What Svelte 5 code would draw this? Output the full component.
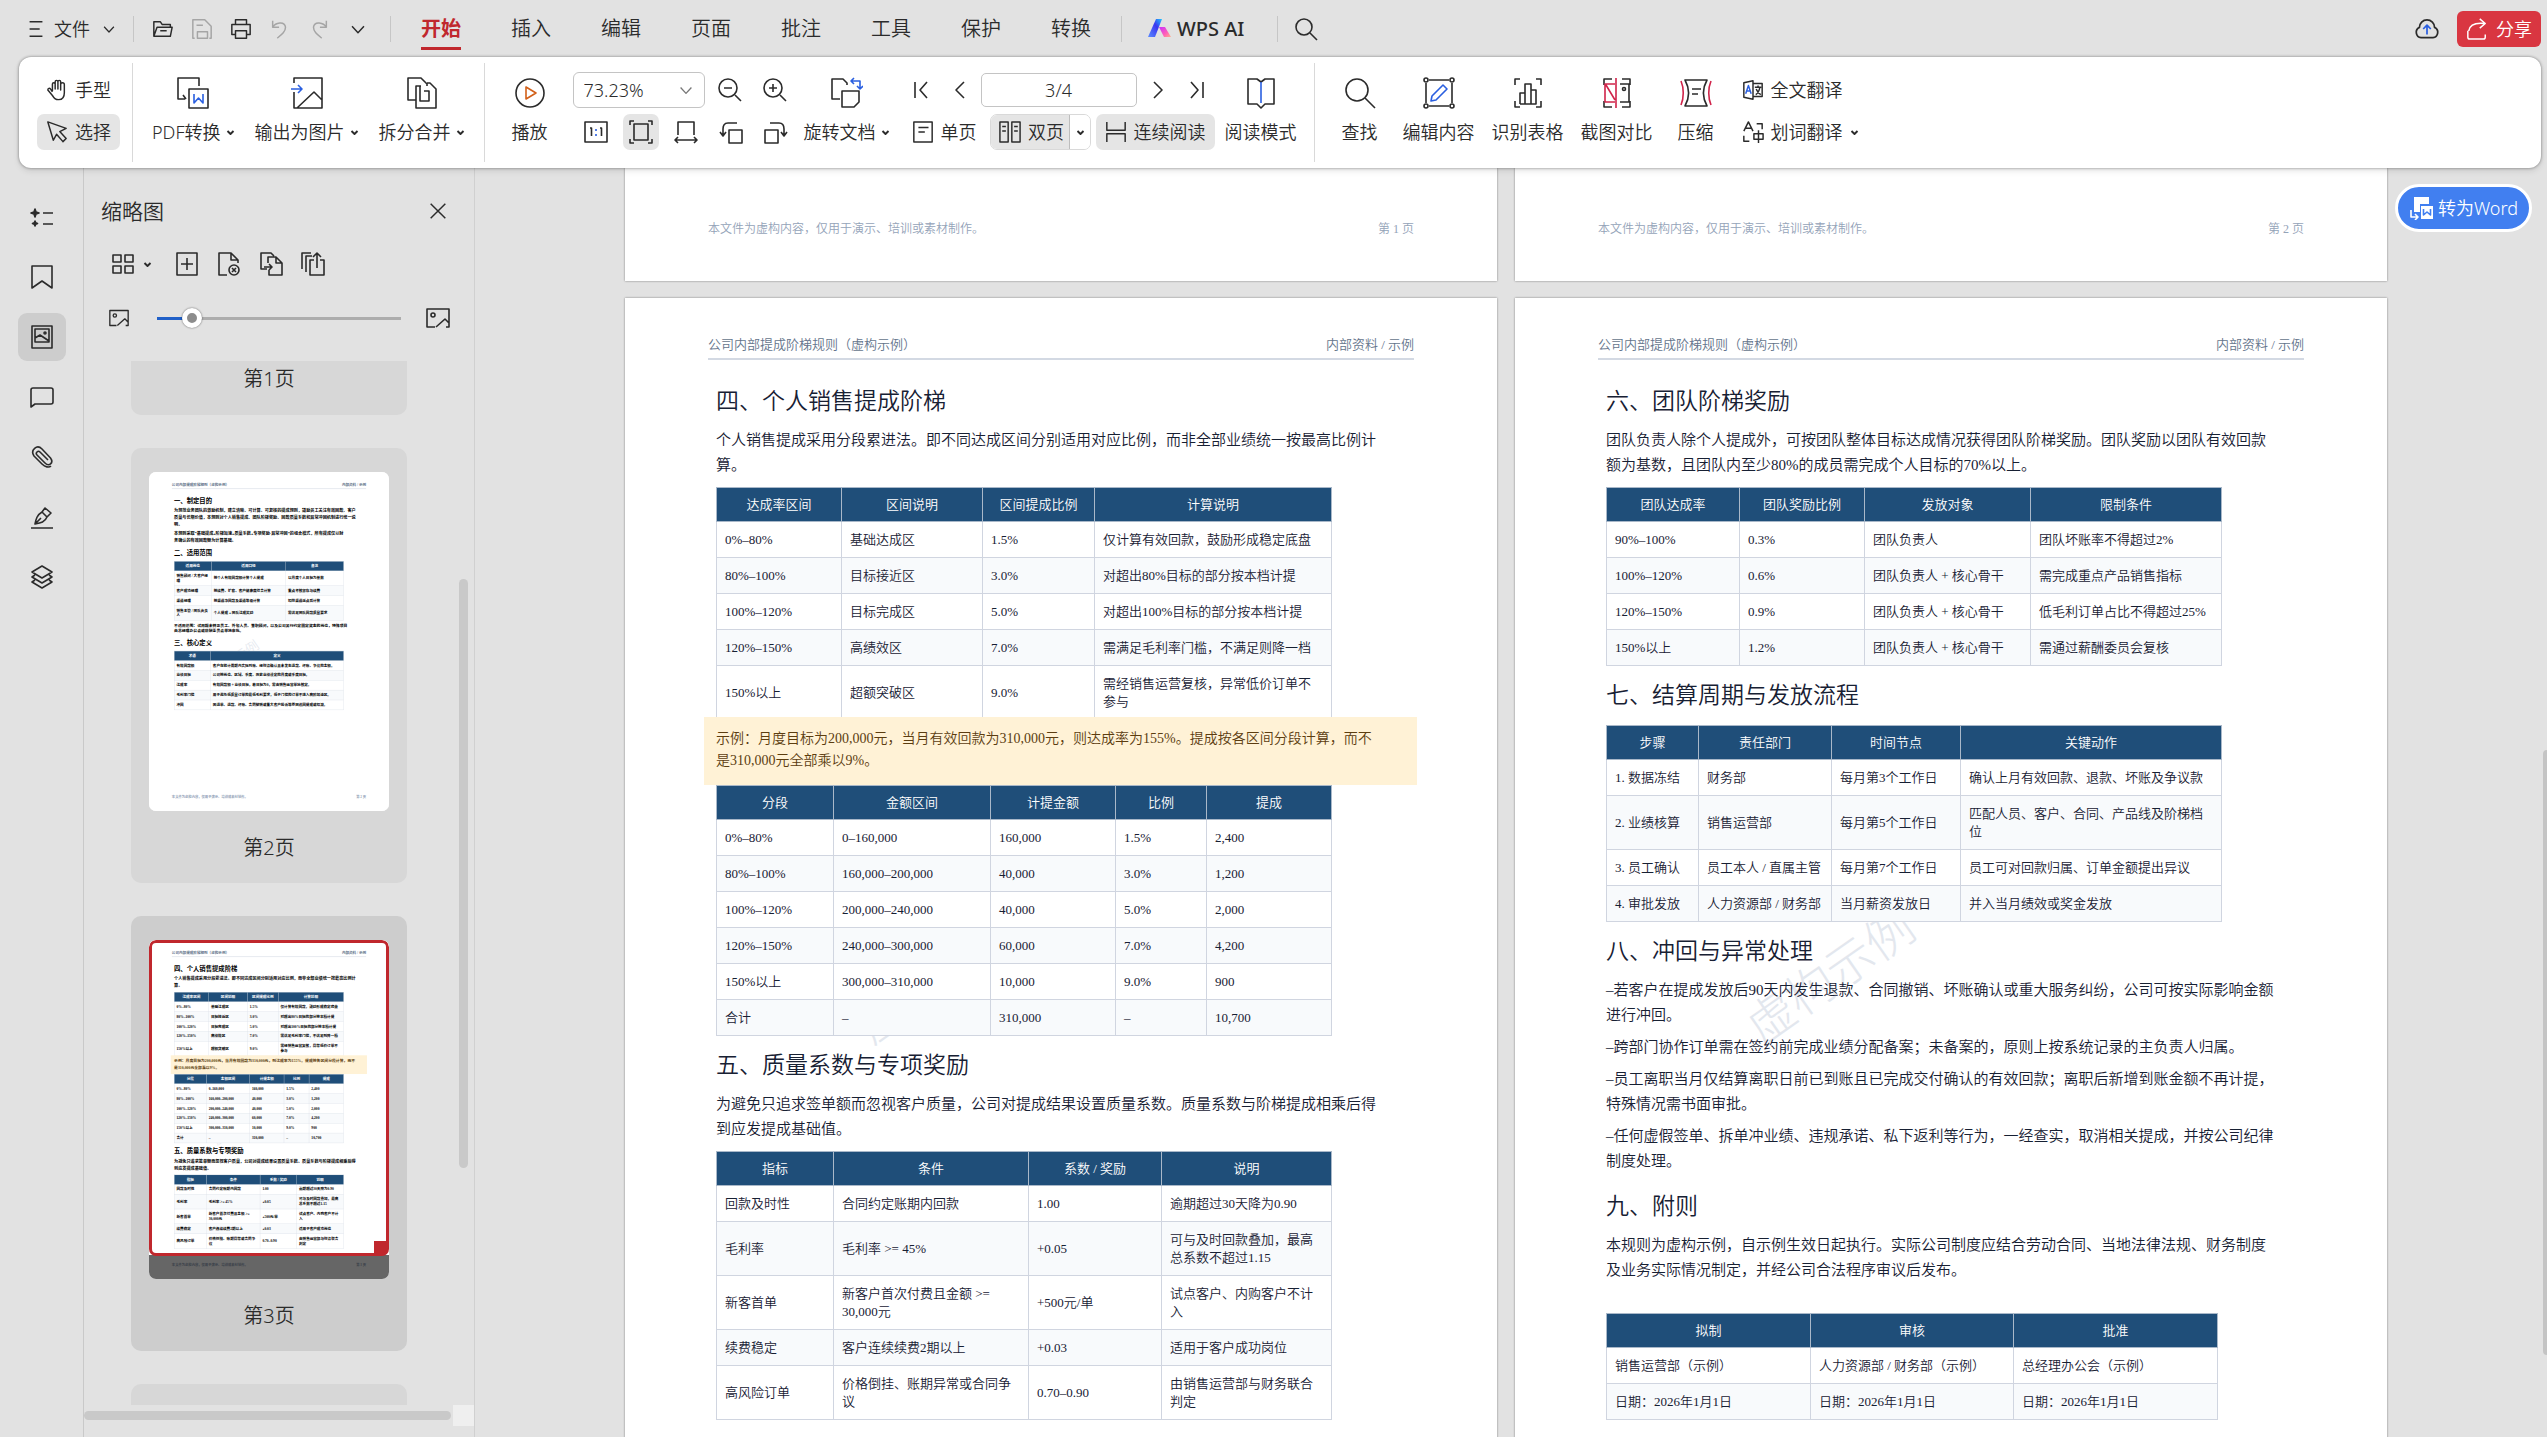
<script>
  let zoomLevel = "73.23%";
  let pageNo = "3/4";
  let thumbSize = 11;

  const tabs = ["开始", "插入", "编辑", "页面", "批注", "工具", "保护", "转换"];

  const quick = [
    { icon: "folder", label: "打开" },
    { icon: "save", label: "保存", off: true },
    { icon: "print", label: "打印" },
    { icon: "undo", label: "撤销", off: true },
    { icon: "redo", label: "恢复", off: true },
    { icon: "down", label: "更多" }
  ];

  const convert = [
    { icon: "pdf", label: "PDF转换", menu: true },
    { icon: "picture", label: "输出为图片", menu: true },
    { icon: "split", label: "拆分合并", menu: true }
  ];

  const fits = [
    { icon: "actual", label: "实际大小" },
    { icon: "fitPage", label: "适合页面", on: true },
    { icon: "fitWidth", label: "适合宽度" },
    { icon: "rotateLeft", label: "向左旋转" },
    { icon: "rotateRight", label: "向右旋转" }
  ];

  const tools = [
    { icon: "find", label: "查找" },
    { icon: "editText", label: "编辑内容" },
    { icon: "ocrTable", label: "识别表格" },
    { icon: "compare", label: "截图对比" },
    { icon: "compress", label: "压缩" }
  ];

  const rail = [
    { icon: "outline", label: "目录" },
    { icon: "bookmark", label: "书签" },
    { icon: "thumbs", label: "缩略图", on: true },
    { icon: "comment", label: "批注" },
    { icon: "clip", label: "附件" },
    { icon: "sign", label: "签名" },
    { icon: "layers", label: "图层" }
  ];

  const thumbTools = [
    { icon: "addPage", label: "插入页面" },
    { icon: "deletePage", label: "删除页面" },
    { icon: "replacePage", label: "替换页面" },
    { icon: "extractPage", label: "提取页面" }
  ];

  // block kinds: h = heading, p = paragraph, t = table, note = callout
  const pageTwo = [
    { h: "一、制定目的" },
    {
      p: [
        "为规范业务团队的激励机制，建立清晰、可计算、可复核的提成规则，鼓励员工关注有效回款、客户",
        "质量与长期价值，本规则对个人销售提成、团队阶梯奖励、回款质量系数和异常冲回机制进行统一说",
        "明。"
      ]
    },
    {
      p: [
        "本规则采取“基础提成+阶梯加速+质量系数+专项奖励-异常冲回”的组合模式，所有提成仅以财",
        "务确认的有效回款额为计算基础。"
      ]
    },
    { h: "二、适用范围" },
    {
      t: {
        widths: [135, 270, 210],
        head: ["适用岗位", "适用口径", "备注"],
        rows: [
          ["销售顾问 / 大客户经理", "按个人有效回款额计算个人提成", "以月度个人目标为基数"],
          ["客户成功经理", "按续费、扩容、客户健康度综合计算", "重点考核留存与续费"],
          ["渠道经理", "按渠道净回款及渠道等级计算", "扣除渠道返点后计算"],
          ["销售主管 / 团队负责人", "个人提成 + 团队达成奖励", "需满足团队回款质量要求"]
        ]
      }
    },
    {
      fine: [
        "不适用范围：试用期未转正员工、外包人员、兼职顾问，以及公司另行约定固定奖金的岗位，特殊项目",
        "由总经理办公会或薪酬委员会单独审批。"
      ]
    },
    { h: "三、核心定义" },
    {
      t: {
        widths: [132, 483],
        head: ["术语", "定义"],
        rows: [
          ["有效回款额", "客户在统计周期内实际到账、经财务确认且未发生退款、坏账、争议的金额。"],
          ["业绩目标", "公司按岗位、区域、季度、历史业绩设定的月度或季度目标。"],
          ["达成率", "有效回款额 ÷ 业绩目标，若目标为0，需由销售运营单独核定。"],
          ["毛利率门槛", "用于避免低质量订单的最低毛利要求，低于门槛的订单不进入高阶加速区。"],
          ["冲回", "因退单、退款、坏账、合同撤销或重大客户投诉等原因追回提成或扣减。"]
        ]
      }
    }
  ];

  const pageThree = [
    { h: "四、个人销售提成阶梯" },
    {
      p: [
        "个人销售提成采用分段累进法。即不同达成区间分别适用对应比例，而非全部业绩统一按最高比例计",
        "算。"
      ]
    },
    {
      t: {
        widths: [125, 141, 112, 237],
        head: ["达成率区间", "区间说明", "区间提成比例", "计算说明"],
        rows: [
          ["0%–80%", "基础达成区", "1.5%", "仅计算有效回款，鼓励形成稳定底盘"],
          ["80%–100%", "目标接近区", "3.0%", "对超出80%目标的部分按本档计提"],
          ["100%–120%", "目标完成区", "5.0%", "对超出100%目标的部分按本档计提"],
          ["120%–150%", "高绩效区", "7.0%", "需满足毛利率门槛，不满足则降一档"],
          ["150%以上", "超额突破区", "9.0%", "需经销售运营复核，异常低价订单不参与"]
        ]
      }
    },
    {
      note: [
        "示例：月度目标为200,000元，当月有效回款为310,000元，则达成率为155%。提成按各区间分段计算，而不",
        "是310,000元全部乘以9%。"
      ]
    },
    {
      t: {
        widths: [117, 157, 125, 91, 125],
        head: ["分段", "金额区间", "计提金额", "比例", "提成"],
        rows: [
          ["0%–80%", "0–160,000", "160,000", "1.5%", "2,400"],
          ["80%–100%", "160,000–200,000", "40,000", "3.0%", "1,200"],
          ["100%–120%", "200,000–240,000", "40,000", "5.0%", "2,000"],
          ["120%–150%", "240,000–300,000", "60,000", "7.0%", "4,200"],
          ["150%以上", "300,000–310,000", "10,000", "9.0%", "900"],
          ["合计", "–", "310,000", "–", "10,700"]
        ]
      }
    },
    { h: "五、质量系数与专项奖励" },
    {
      p: [
        "为避免只追求签单额而忽视客户质量，公司对提成结果设置质量系数。质量系数与阶梯提成相乘后得",
        "到应发提成基础值。"
      ]
    },
    {
      t: {
        widths: [117, 195, 133, 170],
        head: ["指标", "条件", "系数 / 奖励", "说明"],
        rows: [
          ["回款及时性", "合同约定账期内回款", "1.00", "逾期超过30天降为0.90"],
          ["毛利率", "毛利率 >= 45%", "+0.05", "可与及时回款叠加，最高总系数不超过1.15"],
          ["新客首单", "新客户首次付费且金额 >= 30,000元", "+500元/单", "试点客户、内购客户不计入"],
          ["续费稳定", "客户连续续费2期以上", "+0.03", "适用于客户成功岗位"],
          ["高风险订单", "价格倒挂、账期异常或合同争议", "0.70–0.90", "由销售运营部与财务联合判定"]
        ]
      }
    }
  ];

  const pageFour = [
    { h: "六、团队阶梯奖励" },
    {
      p: [
        "团队负责人除个人提成外，可按团队整体目标达成情况获得团队阶梯奖励。团队奖励以团队有效回款",
        "额为基数，且团队内至少80%的成员需完成个人目标的70%以上。"
      ]
    },
    {
      t: {
        widths: [133, 125, 166, 191],
        head: ["团队达成率", "团队奖励比例", "发放对象", "限制条件"],
        rows: [
          ["90%–100%", "0.3%", "团队负责人", "团队坏账率不得超过2%"],
          ["100%–120%", "0.6%", "团队负责人 + 核心骨干", "需完成重点产品销售指标"],
          ["120%–150%", "0.9%", "团队负责人 + 核心骨干", "低毛利订单占比不得超过25%"],
          ["150%以上", "1.2%", "团队负责人 + 核心骨干", "需通过薪酬委员会复核"]
        ]
      }
    },
    { h: "七、结算周期与发放流程" },
    {
      t: {
        widths: [92, 133, 129, 261],
        head: ["步骤", "责任部门", "时间节点", "关键动作"],
        rows: [
          ["1. 数据冻结", "财务部", "每月第3个工作日", "确认上月有效回款、退款、坏账及争议款"],
          ["2. 业绩核算", "销售运营部", "每月第5个工作日", "匹配人员、客户、合同、产品线及阶梯档位"],
          ["3. 员工确认", "员工本人 / 直属主管", "每月第7个工作日", "员工可对回款归属、订单金额提出异议"],
          ["4. 审批发放", "人力资源部 / 财务部", "当月薪资发放日", "并入当月绩效或奖金发放"]
        ]
      }
    },
    { h: "八、冲回与异常处理" },
    {
      p: [
        "–若客户在提成发放后90天内发生退款、合同撤销、坏账确认或重大服务纠纷，公司可按实际影响金额",
        "进行冲回。"
      ]
    },
    { p: ["–跨部门协作订单需在签约前完成业绩分配备案；未备案的，原则上按系统记录的主负责人归属。"] },
    {
      p: [
        "–员工离职当月仅结算离职日前已到账且已完成交付确认的有效回款；离职后新增到账金额不再计提，",
        "特殊情况需书面审批。"
      ]
    },
    {
      p: [
        "–任何虚假签单、拆单冲业绩、违规承诺、私下返利等行为，一经查实，取消相关提成，并按公司纪律",
        "制度处理。"
      ]
    },
    { h: "九、附则" },
    {
      p: [
        "本规则为虚构示例，自示例生效日起执行。实际公司制度应结合劳动合同、当地法律法规、财务制度",
        "及业务实际情况制定，并经公司合法程序审议后发布。"
      ]
    },
    {
      signoff: true,
      t: {
        widths: [204, 203, 204],
        head: ["拟制", "审核", "批准"],
        rows: [
          ["销售运营部（示例）", "人力资源部 / 财务部（示例）", "总经理办公会（示例）"],
          ["日期：2026年1月1日", "日期：2026年1月1日", "日期：2026年1月1日"]
        ]
      }
    }
  ];

  const icons = {
    menu: '<path d="M5 4h14M5 12h11M5 20h14"/>',
    down: '<path d="M5.500 9l6.500 7 6.500-7"/>',
    caret: '<path stroke-width="5" d="M4 8l8 8 8-8"/>',
    folder: '<path d="M2 20V4h7l2 3h9v3M2 20l3.500-10H22l-2 10zM9 14h7"/>',
    save: '<path d="M4 22H2V2h13l7 7v13h-2M6 8h7M7 22v-7h11v7z"/>',
    print: '<path d="M6 7V2h12v5M6 18H2V7h20v11h-4M6 14h12v8H6z"/>',
    undo: '<path d="M4 3v7h7M4 10c3-5 13-7 14 0 0 5-4 8-9 12"/>',
    redo: '<path d="M20 3v7h-7M20 10C17 5 7 3 6 10c0 5 4 8 9 12"/>',
    search: '<circle cx="10" cy="10" r="8"/><path d="M16 16l7 7"/>',
    cloud: '<path d="M6.500 20a5 5 0 0 1-1.500-9.500 7 7 0 0 1 14 0 5 5 0 0 1-1.500 9.500z"/><path class="b" d="M12 17V9M8.500 12L12 8.500l3.500 3.500"/>',
    share: '<path d="M2 14v7c0 1 1 2 2 2h15c1 0 2-1 2-2v-3M3 14C4 8 10 5 20 6M15 1l6 5-6 5"/>',
    hand: '<path d="M7 13V5.500a1.500 1.500 0 0 1 3 0V11V3a1.500 1.500 0 0 1 3 0v8V3a1.500 1.500 0 0 1 3 0v9V6a1.500 1.500 0 0 1 4 0v9c0 5-2 7.500-6 7.500S9 21 7 18l-5-6c0-2 2-2.500 3-1l2 3"/>',
    cursor: '<path d="M2 1l20 7-7 3.500 7 7.500-3.500 3.500-7-8L8 21z"/>',
    pdf: '<path d="M8 22H1V1h21v8M6 18l3 4"/><path d="M12 12h19v19H12z"/><path class="b" d="M17 17v9l4.500-5 4.500 5v-9"/>',
    picture: '<path d="M3 6V1h28v30H3V15M6 31l17-16 8 8"/><path class="b" d="M0 12h11M7 8l4 4-4 4"/>',
    split: '<path d="M10 23H2V1h13l6 6v2M14 14V9M14 9h-4v22h20V12l-6-6h-3M15 9h-5M18 24h5V14h-5M18 24h-4V14"/>',
    play: '<circle cx="16" cy="16" r="14"/><path class="o" d="M12 10v12l10-6z"/>',
    zoomOut: '<circle cx="10" cy="10" r="9"/><path d="M17 17l6 6M6 10h8"/>',
    zoomIn: '<circle cx="10" cy="10" r="9"/><path d="M17 17l6 6M6 10h8M10 6v8"/>',
    actual: '<path d="M1 2h22v20H1zM6 8h1.500v8M16 8h1.500v8"/><path class="b" d="M12 9v2M12 14v2"/>',
    fitPage: '<path d="M5 4h14v16H5zM1 5V1h4M19 1h4v4M23 19v4h-4M5 23H1v-4"/>',
    fitWidth: '<path d="M4 15V2h16v13M1 20h22M4 17l-3 3 3 3M20 17l3 3-3 3"/>',
    rotateLeft: '<path d="M10 10h13v13H10zM18 3H9C5 3 4 6 4 9v6M1 12l3 4 3-4"/>',
    rotateRight: '<path d="M1 10h13v13H1zM6 3h9c4 0 5 3 5 6v6M17 12l3 4 3-4"/>',
    rotateDoc: '<path d="M9 22H1V2h11l4 4v2M11 14h17v11l-5 5H11z"/><path class="b" d="M20 4h9v8M23 1l-3 3 3 3M26 9l3 3 3-3"/>',
    first: '<path d="M6 4v16M18 4l-7 8 7 8"/>',
    prev: '<path d="M16 4l-8 8 8 8"/>',
    next: '<path d="M8 4l8 8-8 8"/>',
    last: '<path d="M18 4v16M6 4l7 8-7 8"/>',
    single: '<path d="M2 1h20v22H2zM7 7h11M7 12h7"/>',
    double: '<path d="M1 1h9v22H1zM14 1h9v22h-9zM3.500 6h4M3.500 11h4M16.500 6h4M16.500 11h4"/>',
    continuous: '<path d="M2 1v9h20V1M2 23v-9h20v9"/>',
    book: '<path d="M16 5l-4-3H3v25h9l4 4 4-4h9V2h-9z"/><path class="b" d="M16 5v21"/>',
    find: '<circle cx="13" cy="13" r="11"/><path d="M21 21l10 10"/>',
    editText: '<path d="M6 3h20M6 29h20M3 6v20M29 6v20"/><circle cx="3" cy="3" r="2"/><circle cx="29" cy="3" r="2"/><circle cx="3" cy="29" r="2"/><circle cx="29" cy="29" r="2"/><path class="b" d="M8 24l1-5L20 8l4 4-11 11z"/>',
    ocrTable: '<path d="M3 8V2h5M24 2h5v6M29 24v6h-5M8 30H3v-6M8 27V16h5M13 27V7h6v20zM19 13h5v14H8"/>',
    compare: '<path d="M11 2H3v6M19 7h9v18h-9M21 2h8v6M29 24v6h-8M3 24v6h8"/><circle cx="23" cy="12" r="1.500"/><path class="r" d="M15 1v30M14 7H4v18h10M5 8l9 15"/>',
    compress: '<path d="M5 3h22c-5 9-5 17 0 26H5c5-9 5-17 0-26zM12 12h9M12 17h6"/><path class="r" d="M1 4c3 7 3 17 0 24M31 4c-3 7-3 17 0 24"/>',
    translate: '<path d="M2 4l10-2v20L2 20zM12 5h10v14H12M14 9h7M17.500 7v2M15 17c3-2 4-5 4.500-8M15.500 11c1 3 3 5 5 6"/><path class="b" d="M4 16l3-9 3 9M5 13h4"/>',
    wordTranslate: '<path d="M2 11L7 1l5 10M4 8h6M16 3h6v6M2 16v6h6M13 14h10v6H13zM18 10v14"/>',
    outline: '<path fill="currentColor" d="M5 4l1 3 3 1-3 1-1 3-1-3-3-1 3-1zM5 16l.7 1.800 1.800.7-1.800.7L5 21l-.7-1.800-1.800-.7 1.800-.7z"/><path d="M13 8h10M13 19h10"/>',
    bookmark: '<path d="M2 1h20v22l-10-7-10 7z"/>',
    thumbs: '<path d="M2 1h20v22H2zM5 4h14v13H5zM5 13l5-3 9 6"/><circle cx="15" cy="8" r="1"/>',
    comment: '<path d="M1 22V5c0-1 1-2 2-2h18c1 0 2 1 2 2v12c0 1-1 2-2 2H5z"/>',
    clip: '<path d="M18 15L10 7C8 5 5 8 7 10l8 8c4 4 9 0 5.500-5L12 4C7-1 0 5 4 11l8 8c3 3 7 4 9 2"/>',
    sign: '<path d="M5 19c1-5 2-9 7-12l5 5c-2 5-6 6-12 7zM12 7l3-4 6 5-4 4M5 19l6-6M1 23h22"/>',
    layers: '<path d="M12 1l10 6-10 6L2 7zM5 10l-3 2 10 6 10-6-3-2M5 15l-3 2 10 6 10-6-3-2"/>',
    close: '<path d="M4 4l16 16M20 4L4 20"/>',
    grid: '<path d="M2 3h8v7H2zM14 3h8v7h-8zM2 14h8v7H2zM14 14h8v7h-8z"/>',
    addPage: '<path d="M2 1h20v22H2zM12 6v12M6 12h12"/>',
    deletePage: '<path d="M10 23H2V1h12l7 7v3M14 1v7h7"/><circle cx="17" cy="18" r="5"/><path d="M15 16l4 4M19 16l-4 4"/>',
    replacePage: '<path d="M8 17H2V1h10l3 3M9 11V5h8l6 6v12H10v-5M17 5v6h6M5 15h8M10 12l3 3-3 3"/>',
    extractPage: '<path d="M13 8H9v15h14V8h-4M16 16V1M12 5l4-4 4 4M1 17V1h9M5 20V4h6"/>',
    image: '<path d="M9 21H1V3h22v18h-3M10 21l9-8 4 4"/><circle cx="7" cy="9" r="2"/>',
    toWord: '<path fill="currentColor" stroke="none" d="M5 1h15v7H11v8H5zM12 10h12v13H12z"/><path d="M2 14v7h7M6 18l3 3-3 3"/><path stroke="#417ff0" d="M14.500 13v6l3.500-3 3.500 3v-6"/>'
  };
</script>

{#snippet icon(name, size = 24, box = 24)}
  <svg width={size} height={size} viewBox="0 0 {box} {box}" aria-hidden="true">{@html icons[name]}</svg>
{/snippet}

{#snippet bigButton(item)}
  <button class="big">
    {@render icon(item.icon, 32, 32)}
    <span class="big-label">
      {item.label}
      {#if item.menu}{@render icon("caret", 9)}{/if}
    </span>
  </button>
{/snippet}

{#snippet footer(no)}
  <footer class="page-foot">
    <span>本文件为虚构内容，仅用于演示、培训或素材制作。</span>
    <span>第 {no} 页</span>
  </footer>
{/snippet}

{#snippet page(blocks, no)}
  <article class="page">
    <div class="watermark">虚构示例</div>
    <header class="page-head">
      <span>公司内部提成阶梯规则（虚构示例）</span>
      <span>内部资料 / 示例</span>
    </header>
    <div class="page-body">
      {#each blocks as block}
        {#if block.h}
          <h2>{block.h}</h2>
        {:else if block.p}
          <p>{#each block.p as line}<span class="line">{line}</span>{/each}</p>
        {:else if block.fine}
          <p class="fine">{#each block.fine as line}<span class="line">{line}</span>{/each}</p>
        {:else if block.note}
          <p class="note">{#each block.note as line}<span class="line">{line}</span>{/each}</p>
        {:else}
          <table class:signoff={block.signoff}>
            <colgroup>
              {#each block.t.widths as w}<col style="width: {w}px" />{/each}
            </colgroup>
            <thead>
              <tr>{#each block.t.head as cell}<th>{cell}</th>{/each}</tr>
            </thead>
            <tbody>
              {#each block.t.rows as row}
                <tr>{#each row as cell}<td>{cell}</td>{/each}</tr>
              {/each}
            </tbody>
          </table>
        {/if}
      {/each}
    </div>
    {@render footer(no)}
  </article>
{/snippet}

<div class="app">
  <nav class="topbar">
    <button class="file">{@render icon("menu", 22)}文件{@render icon("down", 18)}</button>
    <span class="bar"></span>
    <div class="quick">
      {#each quick as q}
        <button class:off={q.off} aria-label={q.label}>{@render icon(q.icon, 22)}</button>
      {/each}
    </div>
    <span class="bar"></span>
    <div class="tabs">
      {#each tabs as tab, i}
        <button class:active={i === 0}>{tab}</button>
      {/each}
    </div>
    <span class="bar"></span>
    <button class="ai">
      <svg width="24" height="24" viewBox="0 0 24 24" aria-hidden="true">
        <defs>
          <linearGradient id="ai-a" x1="0" y1="1" x2="1" y2="0">
            <stop offset="0" stop-color="#5b8cff" />
            <stop offset="0.6" stop-color="#3a35f0" />
            <stop offset="1" stop-color="#1fc8ff" />
          </linearGradient>
          <linearGradient id="ai-b" x1="0" y1="0" x2="1" y2="1">
            <stop offset="0" stop-color="#c930ff" />
            <stop offset="0.6" stop-color="#ff5fb8" />
            <stop offset="1" stop-color="#ffb08a" />
          </linearGradient>
        </defs>
        <path fill="url(#ai-b)" stroke="none" d="M12 10h6l6 10h-7z" />
        <path fill="url(#ai-a)" stroke="none" d="M9 2h6l-7 18H1z" />
      </svg>
      WPS AI
    </button>
    <span class="bar"></span>
    <button aria-label="搜索">{@render icon("search", 24)}</button>
    <button class="cloud" aria-label="云同步">{@render icon("cloud", 26)}</button>
    <button class="share">{@render icon("share", 22)}分享</button>
  </nav>

  <section class="ribbon">
    <div class="stack">
      <button class="wide">{@render icon("hand", 22)}手型</button>
      <button class="wide on">{@render icon("cursor", 22)}选择</button>
    </div>
    <span class="rule"></span>
    <div class="group convert">
      {#each convert as item}{@render bigButton(item)}{/each}
    </div>
    <span class="rule"></span>
    <div class="group view">
      {@render bigButton({ icon: "play", label: "播放" })}
      <div class="stack">
        <div class="row">
          <label class="zoom">
            <select aria-label="缩放比例" bind:value={zoomLevel}>
              <option>73.23%</option>
              <option>100%</option>
            </select>
            {@render icon("down", 20)}
          </label>
          <button class="small" aria-label="缩小">{@render icon("zoomOut")}</button>
          <button class="small" aria-label="放大">{@render icon("zoomIn")}</button>
        </div>
        <div class="row fits">
          {#each fits as f}
            <button class="small" class:on={f.on} aria-label={f.label}>{@render icon(f.icon)}</button>
          {/each}
        </div>
      </div>
    </div>
    <div class="rotate">{@render bigButton({ icon: "rotateDoc", label: "旋转文档", menu: true })}</div>
    <div class="stack">
      <div class="row pager">
        <button class="small" aria-label="首页">{@render icon("first")}</button>
        <button class="small" aria-label="上一页">{@render icon("prev")}</button>
        <input type="text" aria-label="页码" bind:value={pageNo} />
        <button class="small" aria-label="下一页">{@render icon("next")}</button>
        <button class="small" aria-label="末页">{@render icon("last")}</button>
      </div>
      <div class="row pager">
        <button class="wide">{@render icon("single", 22)}单页</button>
        <div class="split">
          <button>{@render icon("double", 22)}双页</button>
          <button class="more" aria-label="双页选项">{@render icon("caret", 9)}</button>
        </div>
        <button class="wide on">{@render icon("continuous", 22)}连续阅读</button>
      </div>
    </div>
    <div class="reading">{@render bigButton({ icon: "book", label: "阅读模式" })}</div>
    <span class="rule"></span>
    <div class="group tools">
      {#each tools as item}{@render bigButton(item)}{/each}
    </div>
    <div class="stack">
      <button class="wide">{@render icon("translate", 22)}全文翻译</button>
      <button class="wide">{@render icon("wordTranslate", 22)}划词翻译{@render icon("caret", 9)}</button>
    </div>
  </section>

  <main>
    <aside class="rail">
      {#each rail as r}
        <button class:on={r.on} aria-label={r.label}>{@render icon(r.icon)}</button>
      {/each}
    </aside>

    <section class="panel">
      <div class="panel-title">
        <span>缩略图</span>
        <button aria-label="关闭">{@render icon("close", 22)}</button>
      </div>
      <div class="panel-tools">
        <button class="grid-menu" aria-label="视图">{@render icon("grid")}{@render icon("caret", 9)}</button>
        {#each thumbTools as t}
          <button aria-label={t.label}>{@render icon(t.icon)}</button>
        {/each}
      </div>
      <div class="slider">
        {@render icon("image", 20)}
        <input type="range" aria-label="缩略图大小" min="0" max="100" bind:value={thumbSize} />
        {@render icon("image", 24)}
      </div>
      <div class="thumb-area">
        <div class="thumb-list">
          <figure class="tail"><figcaption>第1页</figcaption></figure>
          <figure>
            <div class="mini"><div class="mini-page">{@render page(pageTwo, 2)}</div></div>
            <figcaption>第2页</figcaption>
          </figure>
          <figure class="current">
            <div class="mini">
              <div class="mini-page">{@render page(pageThree, 3)}</div>
              <div class="shade"></div>
              <div class="frame"></div>
            </div>
            <figcaption>第3页</figcaption>
          </figure>
          <figure></figure>
        </div>
        <div class="vscroll"><span></span></div>
      </div>
      <div class="hscroll"><span></span><i></i></div>
    </section>

    <section class="viewer">
      <div class="pages">
        <article class="page cut">{@render footer(1)}</article>
        <article class="page cut">{@render footer(2)}</article>
        {@render page(pageThree, 3)}
        {@render page(pageFour, 4)}
      </div>
      <button class="to-word">{@render icon("toWord", 24)}转为Word</button>
      <div class="page-scroll"></div>
    </section>
  </main>
</div>

<style>
  :global(body) {
    margin: 0;
    overflow: hidden;
  }

  .app {
    --ui-bg: #e2e2e2;
    --ink: #2b2b2b;
    --blue: #2a5fe0;
    --red: #c0272d;
    display: flex;
    flex-direction: column;
    height: 100vh;
    background: var(--ui-bg);
    color: var(--ink);
    font-family: "Noto Sans", "Noto Sans CJK SC", sans-serif;
    font-size: 18px;
    font-weight: 350;
    line-height: 24px;
  }

  button {
    display: flex;
    align-items: center;
    justify-content: center;
    padding: 0;
    border: 0;
    background: none;
    color: inherit;
    font: inherit;
    white-space: nowrap;
  }

  svg {
    flex: none;
    fill: none;
    stroke: currentColor;
    stroke-width: 1.6;
    stroke-linejoin: round;
  }

  svg :global(.b) {
    stroke: var(--blue);
  }

  svg :global(.o) {
    stroke: #d2601a;
  }

  svg :global(.r) {
    stroke: #d0244a;
  }

  /* top bar */
  .topbar {
    display: flex;
    flex: none;
    align-items: center;
    height: 57px;
    padding: 0 6px 0 25px;
  }

  .bar {
    width: 1px;
    height: 26px;
    background: #c6c6c6;
  }

  .file {
    gap: 7px;
    margin-right: 15px;
  }

  .file svg:last-child {
    margin-left: 3px;
  }

  .quick {
    display: flex;
    gap: 17px;
    margin: 0 21px 0 18px;
  }

  .off {
    color: #a5a5a5;
  }

  .tabs {
    display: flex;
    gap: 50px;
    margin: 0 30px;
    font-size: 20px;
  }

  .tabs button {
    height: 42px;
    border-bottom: 3px solid transparent;
    border-top: 3px solid transparent;
    box-sizing: border-box;
  }

  .tabs .active {
    border-bottom-color: var(--red);
    color: var(--red);
    font-weight: 700;
  }

  .ai {
    gap: 6px;
    margin: 0 33px 0 25px;
    font-size: 20px;
    font-weight: 500;
  }

  .ai + .bar + button {
    margin-left: 16px;
  }

  .cloud {
    margin-left: auto;
  }

  .share {
    gap: 8px;
    width: 84px;
    height: 36px;
    margin-left: 17px;
    border-radius: 6px;
    background: #d93641;
    color: #fff;
  }

  /* ribbon */
  .ribbon {
    position: relative;
    z-index: 2;
    display: flex;
    flex: none;
    box-sizing: border-box;
    height: 111px;
    margin: 0 6px 0 19px;
    padding: 6px 18px;
    border-radius: 12px;
    background: #fff;
    box-shadow: 0 0 3px rgba(0, 0, 0, 0.45), 0 3px 6px rgba(0, 0, 0, 0.1);
  }

  .rule {
    width: 1px;
    height: 99px;
    background: #d9d9d9;
  }

  .stack {
    display: flex;
    flex-direction: column;
    gap: 6px;
    padding-top: 9px;
  }

  .row,
  .group {
    display: flex;
  }

  .wide {
    gap: 7px;
    height: 36px;
    padding: 0 9px;
    border-radius: 7px;
  }

  .on {
    background: #e5e5e5;
  }

  .ribbon > .stack:first-child {
    margin-right: 12px;
  }

  .big {
    flex-direction: column;
    justify-content: flex-start;
    gap: 11px;
    min-width: 52px;
    padding-top: 14px;
  }

  .big-label {
    display: flex;
    align-items: center;
    gap: 5px;
  }

  .convert {
    gap: 20px;
    margin: 0 19px;
  }

  .view {
    gap: 17px;
    margin-left: 19px;
  }

  .small {
    width: 36px;
    height: 36px;
    border-radius: 7px;
  }

  .row > .small + .small {
    margin-left: 9px;
  }

  .fits {
    padding-left: 5px;
  }

  .zoom {
    display: flex;
    align-items: center;
    box-sizing: border-box;
    width: 132px;
    height: 36px;
    margin-right: 7px;
    padding: 0 8px 0 10px;
    border: 1px solid #c4c4c4;
    border-radius: 6px;
    color: #777;
  }

  .zoom select {
    flex: 1;
    min-width: 0;
    padding: 0;
    border: 0;
    background: none;
    color: var(--ink);
    font: inherit;
    appearance: none;
  }

  .rotate {
    display: flex;
    margin: 0 13px 0 10px;
  }

  .pager {
    justify-content: space-between;
    align-items: center;
    gap: 3px;
  }

  .pager > .small + .small {
    margin-left: 0;
  }

  .pager input {
    box-sizing: border-box;
    width: 156px;
    height: 34px;
    border: 1px solid #c4c4c4;
    border-radius: 5px;
    background: #fff;
    color: var(--ink);
    font: inherit;
    text-align: center;
  }

  .split {
    display: flex;
    box-sizing: border-box;
    height: 36px;
    border: 1px solid #d9d9d9;
    border-radius: 7px;
    overflow: hidden;
  }

  .split button {
    gap: 7px;
    padding: 0 5px 0 8px;
    border-right: 1px solid #bdbdbd;
    background: #e5e5e5;
  }

  .split .more {
    width: 20px;
    padding: 0;
    border: 0;
    background: #fff;
  }

  .reading {
    display: flex;
    margin: 0 17px 0 10px;
  }

  .tools {
    gap: 17px;
    margin: 0 11px 0 19px;
  }

  .tools + .stack {
    align-items: flex-start;
  }

  /* side */
  main {
    display: flex;
    flex: 1;
    min-height: 0;
  }

  .rail {
    display: flex;
    flex: none;
    flex-direction: column;
    align-items: center;
    gap: 12px;
    width: 83px;
    padding-top: 25px;
    border-right: 1px solid #c9c9c9;
  }

  .rail button {
    width: 48px;
    height: 48px;
    border-radius: 9px;
  }

  .rail .on {
    background: #cdcdcd;
  }

  .panel {
    display: flex;
    flex: none;
    flex-direction: column;
    width: 390px;
    border-right: 1px solid #d0d0d0;
  }

  .panel-title {
    display: flex;
    justify-content: space-between;
    align-items: center;
    height: 30px;
    padding: 28px 25px 0 17px;
    font-size: 21px;
  }

  .panel-tools {
    display: flex;
    gap: 18px;
    padding: 26px 27px 0;
  }

  .grid-menu {
    gap: 8px;
    margin-right: 5px;
  }

  .slider {
    display: flex;
    align-items: center;
    height: 24px;
    padding: 30px 24px 0 25px;
  }

  .slider input {
    flex: 1;
    min-width: 0;
    height: 20px;
    margin: 0 25px 0 28px;
    background: linear-gradient(to right, #2060c8 14%, #adadad 14%) center / 100% 3px no-repeat;
    appearance: none;
  }

  .slider input::-webkit-slider-thumb {
    width: 20px;
    height: 20px;
    border: 5px solid #fff;
    border-radius: 50%;
    background: #8c8c8c;
    box-shadow: 0 0 2px rgba(0, 0, 0, 0.6);
    appearance: none;
    box-sizing: border-box;
  }

  .thumb-area {
    display: flex;
    justify-content: space-between;
    flex: 1;
    min-height: 0;
    margin-top: 31px;
    padding: 0 6px 0 47px;
  }

  .thumb-list {
    width: 276px;
    overflow: hidden;
  }

  figure {
    display: flex;
    flex-direction: column;
    align-items: center;
    box-sizing: border-box;
    height: 435px;
    margin: 0 0 33px;
    padding-top: 24px;
    border-radius: 10px;
    background: #d7d7d7;
  }

  figure.tail {
    height: 54px;
    padding-top: 4px;
    border-radius: 0 0 10px 10px;
  }

  figure.current {
    background: #cdcdcd;
  }

  figcaption {
    font-size: 20px;
    line-height: 28px;
  }

  .mini {
    position: relative;
    width: 240px;
    height: 339px;
    margin-bottom: 23px;
    border-radius: 7px;
    background: #fff;
    overflow: hidden;
  }

  .mini-page {
    width: 872px;
    transform: scale(0.2752);
    transform-origin: 0 0;
  }

  .shade {
    position: absolute;
    right: 0;
    bottom: 0;
    left: 0;
    height: 24px;
    background: rgba(0, 0, 0, 0.6);
  }

  .frame {
    position: absolute;
    top: 0;
    right: 0;
    bottom: 23px;
    left: 0;
    border: 3px solid var(--red);
    border-radius: 7px;
    background: linear-gradient(var(--red), var(--red)) right bottom / 12px 12px no-repeat;
  }

  .vscroll span {
    display: block;
    width: 9px;
    height: 589px;
    margin-top: 218px;
    border-radius: 5px;
    background: #c9c9c9;
  }

  .hscroll {
    display: flex;
    align-items: center;
    justify-content: space-between;
    flex: none;
    height: 21px;
    margin-bottom: 11px;
  }

  .hscroll span {
    width: 367px;
    height: 9px;
    border-radius: 5px;
    background: #c9c9c9;
  }

  .hscroll i {
    width: 21px;
    height: 21px;
    background: #efefef;
  }

  /* document */
  .viewer {
    position: relative;
    flex: 1;
    min-width: 0;
    overflow: hidden;
  }

  .pages {
    display: grid;
    grid-template-columns: 872px 872px;
    justify-content: center;
    gap: 17px 18px;
    padding-right: 10px;
  }

  .page {
    position: relative;
    z-index: 0;
    display: flex;
    flex-direction: column;
    box-sizing: border-box;
    min-height: 1233px;
    padding: 38px 83px 42px;
    background: #fff;
    box-shadow: 0 0 2px rgba(0, 0, 0, 0.45);
    color: #172033;
    font-family: "Liberation Serif", "Noto Sans CJK SC", serif;
    font-size: 13px;
    line-height: 18px;
  }

  .mini .page {
    color: #000;
    font-weight: 700;
  }

  .page.cut {
    min-height: 113px;
  }

  .page-head,
  .page-foot {
    display: flex;
    justify-content: space-between;
  }

  .page-head {
    padding-bottom: 4px;
    border-bottom: 2px solid #d3d9e3;
    color: #64748b;
  }

  .page-foot {
    margin-top: auto;
    color: #94a3b8;
    font-size: 12px;
    line-height: 20px;
  }

  .page-body {
    padding: 26px 0 0 8px;
  }

  .watermark {
    position: absolute;
    top: 649px;
    left: 220px;
    z-index: -1;
    color: #e3e7ee;
    font-size: 48px;
    font-weight: 300;
    line-height: 60px;
    transform: rotate(-35deg);
  }

  h2 {
    margin: 14px 0 10px;
    font-size: 23px;
    font-weight: inherit;
    line-height: 32px;
  }

  h2:first-child {
    margin-top: 0;
  }

  p {
    margin: 0 0 7px;
    font-size: 15px;
    line-height: 25px;
    white-space: nowrap;
  }

  p + h2 {
    margin-top: 17px;
  }

  .line {
    display: block;
  }

  p.fine {
    margin-top: 9px;
    font-size: 14px;
    line-height: 20px;
  }

  p.note {
    position: relative;
    margin: -3px -3px 0 -12px;
    padding: 11px 12px 13px;
    background: #fff2d6;
    color: #5c3d10;
    font-size: 14px;
    line-height: 22px;
  }

  table {
    position: relative;
    border-collapse: collapse;
    table-layout: fixed;
    width: min-content;
    background: #fff;
  }

  p + table {
    margin-top: 9px;
  }

  h2 + table {
    margin-top: 13px;
  }

  p.note + table {
    margin-top: 0;
  }

  p + table.signoff {
    margin-top: 30px;
  }

  th,
  td {
    padding: 9px 8px 8px;
    border: 1px solid #d0d5e0;
    font-weight: inherit;
    text-align: left;
  }

  th {
    padding: 8px 8px 7px;
    border-color: #a9b8c9;
    background: #1f4e79;
    color: #fff;
    text-align: center;
  }

  tbody tr:nth-child(even) {
    background: #f8fafc;
  }

  .to-word {
    position: absolute;
    top: 16px;
    right: 15px;
    gap: 5px;
    width: 137px;
    height: 48px;
    border: 3px solid #fff;
    border-radius: 24px;
    background: #417ff0;
    color: #fff;
  }

  .page-scroll {
    position: absolute;
    top: 582px;
    right: 0;
    bottom: 82px;
    width: 4px;
    border-radius: 4px 0 0 4px;
    background: #c4c4c4;
  }
</style>
